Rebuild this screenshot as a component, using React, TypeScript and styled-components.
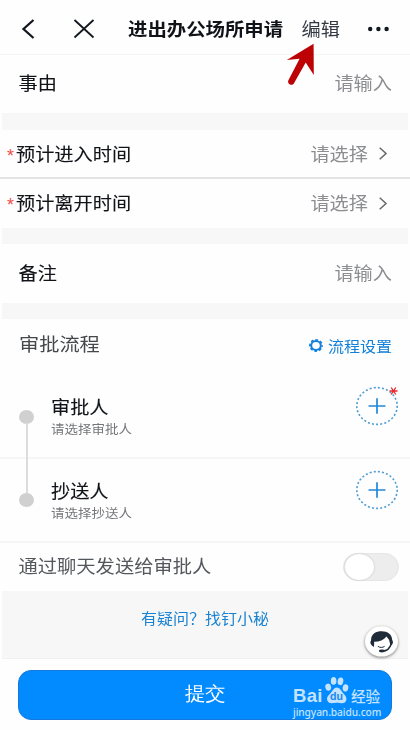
import React from "react";
import styled, { createGlobalStyle } from "styled-components";

const Global = createGlobalStyle`
  * { box-sizing: border-box; }
  body { margin: 0; background: #fff; font-family: "Noto Sans CJK SC", sans-serif; }
`;

const Screen = styled.main`
  width: 410px;
  height: 730px;
  position: relative;
  overflow: hidden;
  display: flex;
  flex-direction: column;
  background: #fefefe;
`;

const Label = styled.span<{ $size?: number; $color?: string; $weight?: number }>`
  display: block;
  white-space: nowrap;
  font-size: ${(p) => p.$size ?? 19.2}px;
  line-height: 24px;
  font-weight: ${(p) => p.$weight ?? 400};
  color: ${(p) => p.$color ?? "#101318"};
  -webkit-text-stroke: ${(p) => (p.$color || p.$weight ? 0 : 0.12)}px currentColor;
  transform: scaleY(0.92);
`;

const Header = styled.header`
  height: 55px;
  flex: none;
  display: flex;
  align-items: center;
  padding: 4px 21px 0 22px;
  border-bottom: 1px solid #f4f4f5;
`;

const BackButton = styled.span`
  width: 52px;
  height: 20px;
`;

const CloseButton = styled.span`
  width: 54px;
  height: 20px;
`;

const Title = styled(Label)`
  width: 173.5px;
`;

const EditLink = styled(Label)`
  flex: 1;
`;

const Icon = styled.svg`
  display: block;
  flex: none;
  overflow: visible;
`;

const Row = styled.div<{ $h: number; $left?: number; $right?: number; $bottom?: number; $line?: string }>`
  height: ${(p) => p.$h}px;
  flex: none;
  display: flex;
  align-items: center;
  justify-content: space-between;
  padding: 0 ${(p) => p.$right ?? 18}px ${(p) => p.$bottom ?? 2}px ${(p) => p.$left ?? 18.5}px;
  border-bottom: ${(p) => (p.$line ? `2px solid ${p.$line}` : "none")};
`;

const Gap = styled.div<{ $h: number }>`
  height: ${(p) => p.$h}px;
  flex: none;
  margin: 0 2px;
  background: #f7f7f7;
`;

const Group = styled.div<{ $gap?: number }>`
  display: flex;
  align-items: center;
  gap: ${(p) => p.$gap ?? 0}px;
`;

const Star = styled.span`
  width: 9px;
  font-family: "Liberation Sans", sans-serif;
  font-size: 18px;
  line-height: 18px;
  padding-top: 4px;
  color: #f0504a;
`;

const FlowHead = styled.div`
  height: 56px;
  flex: none;
  display: flex;
  align-items: center;
  justify-content: space-between;
  padding: 0 18px 6px 19px;
`;

const FlowLink = styled(Group)`
  padding-top: 3px;
`;

const Steps = styled.div`
  flex: none;
  display: flex;
  flex-direction: column;
`;

const Step = styled.div`
  height: 84px;
  display: flex;
  padding: 12px 11px 0 19px;
  border-bottom: 2px solid #f6f6f6;
`;

const Rail = styled.div<{ $top: number }>`
  width: 32px;
  padding-top: ${(p) => p.$top}px;
  position: relative;
`;

const Dot = styled.i`
  display: block;
  width: 15px;
  height: 14px;
  border-radius: 50%;
  background: #d0d0d0;
`;

const Connector = styled.i`
  position: absolute;
  left: 7px;
  top: 36px;
  width: 1.5px;
  height: 71px;
  background: #dcdcdc;
`;

const StepText = styled.div`
  flex: 1;
  padding-top: 7.5px;
`;

const StepHint = styled(Label)`
  line-height: 19px;
`;

const Add = styled.div`
  width: 43px;
  position: relative;
`;

const Required = styled.span`
  position: absolute;
  right: 1px;
  top: 0;
  line-height: 0;
`;

const Toggle = styled.div`
  width: 56px;
  height: 28px;
  margin: 2px -7px 0 0;
  border-radius: 15px;
  background: #ededed;
  border: 1px solid #e6e6e6;
`;

const Knob = styled.i`
  display: block;
  width: 29px;
  height: 26px;
  margin-left: 1px;
  border-radius: 50%;
  background: #fff;
  box-shadow: 0 0 2px #bbb;
`;

const Help = styled.div`
  height: 68px;
  flex: none;
  margin: 0 2px;
  padding-top: 15px;
  background: #f7f7f7;
  border-bottom: 1px solid #eff2f4;
  text-align: center;
`;

const Submit = styled.button`
  width: 374px;
  height: 50px;
  flex: none;
  margin: 11px 0 0 18px;
  padding: 0 0 2px;
  display: flex;
  align-items: center;
  justify-content: center;
  border: 1px solid #1479db;
  border-radius: 13px;
  background: #028aff;
`;

const Pointer = styled.svg`
  position: absolute;
  left: 284px;
  top: 42px;
`;

const Support = styled.svg`
  position: absolute;
  left: 362px;
  top: 624px;
  overflow: visible;
  filter: drop-shadow(0 1px 1.5px rgba(0, 0, 0, 0.5));
`;

const Watermark = styled.div`
  position: absolute;
  left: 293px;
  top: 676px;
  width: 92px;
  color: #c4e3ff;
`;

const Brand = styled.div`
  display: flex;
  height: 28px;
  align-items: flex-end;
`;

const BrandLatin = styled.span`
  width: 31px;
  font: 700 18.5px/17px "Liberation Sans", sans-serif;
  letter-spacing: 0.3px;
`;

const BrandHan = styled.span`
  margin-left: 1px;
  font-size: 14.6px;
  font-weight: 500;
  line-height: 17px;
  white-space: nowrap;
`;

const Site = styled.div`
  font: 500 10.2px/13px "Noto Sans", sans-serif;
  letter-spacing: -0.09px;
  margin-top: 2px;
  white-space: nowrap;
`;

const Chevron = () => (
  <Icon width="8" height="13" viewBox="0 0 8 13" fill="none" stroke="#66686b" strokeWidth="1.5">
    <path d="M.7.8 7 6.5.7 12.2" />
  </Icon>
);

const Asterisk = () => (
  <Icon width="9" height="8" viewBox="0 0 9 8" stroke="#e5252b" strokeWidth="1.3">
    <path d="M.5 4H8.5M2.2 .5 6.8 7.5M6.8 .5 2.2 7.5" />
  </Icon>
);

const AddIcon = () => (
  <Icon width="42" height="38" viewBox="0 0 42 38" fill="none">
    <ellipse cx="21" cy="19" rx="20.2" ry="18.4" stroke="#4f9cd4" strokeWidth="1.6" strokeDasharray="2 2.15" />
    <path d="M12.5 19h17M21 11.2v15.6" stroke="#2088d8" strokeWidth="1.7" />
  </Icon>
);

const Gear = () => (
  <Icon width="14" height="13" viewBox="0 0 14 13">
    <g fill="none" stroke="#1280dc">
      <ellipse cx="7" cy="6.5" rx="4.8" ry="4.4" strokeWidth="2" />
      <ellipse cx="7" cy="6.5" rx="6.1" ry="5.6" strokeWidth="1.7" strokeDasharray="2.6 2" strokeDashoffset="1.3" />
    </g>
  </Icon>
);

const Paw = () => (
  <Icon width="26" height="28" viewBox="0 0 26 29" fill="#c4e3ff">
    <ellipse cx="3.9" cy="11.6" rx="3" ry="3.7" transform="rotate(-12 3.9 11.6)" />
    <ellipse cx="9.5" cy="5.1" rx="2.9" ry="4" />
    <ellipse cx="16.6" cy="5.5" rx="2.9" ry="4" transform="rotate(12 16.6 5.5)" />
    <ellipse cx="21.8" cy="12.4" rx="2.9" ry="3.8" transform="rotate(8 21.8 12.4)" />
    <path d="M12.8 12c3.2 0 4.2 3.4 6.8 6 2.7 2.6 4.2 5 2.5 8.2-1.8 3.3-5.4 1.4-9.3 1.4s-7.4 1.9-9.4-1.4c-1.8-3.4.2-6 2.7-8.2 2.7-2.6 3.5-6 6.7-6Z" />
    <text x="5.8" y="24.8" fontFamily="Liberation Sans" fontWeight="700" fontSize="11" fill="#1688ef">du</text>
  </Icon>
);

const SelectRow = ({ text, line }: { text: string; line?: string }) => (
  <Row $h={49} $left={7} $right={23} $bottom={line ? 0 : 1} $line={line}>
    <Group>
      <Star>*</Star>
      <Label>{text}</Label>
    </Group>
    <Group $gap={11}>
      <Label $color="#8c8d90">请选择</Label>
      <Chevron />
    </Group>
  </Row>
);

export default function App() {
  return (
    <>
      <Global />
      <Screen>
        <Header>
          <BackButton>
            <Icon width="12" height="20" viewBox="0 0 12 20" fill="none" stroke="#121820" strokeWidth="2.3">
              <path d="M11.5 1 1.5 10l10 9" />
            </Icon>
          </BackButton>
          <CloseButton>
            <Icon width="20" height="19" viewBox="0 0 20 19" fill="none" stroke="#121820" strokeWidth="1.8">
              <path d="m.5 1 19 17.5M19.5 1 .5 18.5" />
            </Icon>
          </CloseButton>
          <Title $size={19.4} $weight={700}>进出办公场所申请</Title>
          <EditLink $color="#343a44">编辑</EditLink>
          <Icon width="21" height="5" viewBox="0 0 21 5" fill="#111820">
            <circle cx="2.2" cy="2" r="2.2" />
            <circle cx="10.4" cy="2" r="2.2" />
            <circle cx="18.6" cy="2" r="2.2" />
          </Icon>
        </Header>
        <Row $h={58}>
          <Label>事由</Label>
          <Label $color="#8c8d90">请输入</Label>
        </Row>
        <Gap $h={17} />
        <SelectRow text="预计进入时间" line="#e4e4e5" />
        <SelectRow text="预计离开时间" />
        <Gap $h={16} />
        <Row $h={59}>
          <Label>备注</Label>
          <Label $color="#8c8d90">请输入</Label>
        </Row>
        <Gap $h={16} />
        <FlowHead>
          <Label $size={20.2} $color="#45474a">审批流程</Label>
          <FlowLink $gap={5}>
            <Gear />
            <Label $size={16} $color="#1280d8">流程设置</Label>
          </FlowLink>
        </FlowHead>
        <Steps>
          <Step>
            <Rail $top={23}>
              <Dot />
              <Connector />
            </Rail>
            <StepText>
              <Label>审批人</Label>
              <StepHint $size={13.5} $color="#75777a">请选择审批人</StepHint>
            </StepText>
            <Add>
              <AddIcon />
              <Required><Asterisk /></Required>
            </Add>
          </Step>
          <Step>
            <Rail $top={22}>
              <Dot />
            </Rail>
            <StepText>
              <Label>抄送人</Label>
              <StepHint $size={13.5} $color="#75777a">请选择抄送人</StepHint>
            </StepText>
            <Add>
              <AddIcon />
            </Add>
          </Step>
        </Steps>
        <Row $h={48}>
          <Label $size={19.3} $color="#54575c">通过聊天发送给审批人</Label>
          <Toggle>
            <Knob />
          </Toggle>
        </Row>
        <Help>
          <Label $size={16} $color="#1a82d2">有疑问？找钉小秘</Label>
        </Help>
        <Submit>
          <Label $size={20.3} $color="#fff">提交</Label>
        </Submit>
        <Pointer width="32" height="46" viewBox="0 0 32 46">
          <path d="M29.6 1.8 2.8 18l12.8-1.2L4.4 38.2C2.8 41.8 8 44.8 10 41.2L21.7 20.4 29.8 33Z" fill="#bd0206" />
        </Pointer>
        <Support width="38" height="35" viewBox="0 0 38 35">
          <ellipse cx="19.5" cy="17.4" rx="16.5" ry="15.2" fill="#fff" />
          <path d="M12 23C8.5 21 7.5 18.5 9 16.5 9.2 9.5 14 7.3 19.8 7.3S30 10.5 30.2 16c1.3 1.6 1 4.5-1.6 5.7L27 15.8 24.5 12.5c-2.6 3.6-7 5.3-12.3 5.3Z" fill="#202b3a" />
          <path d="M29 20c-.9 4.6-4 6.9-9 7.3" fill="none" stroke="#202b3a" strokeWidth="1.4" />
          <path d="M15.8 22.3c2 1.5 4.8 1.5 6.8 0" fill="none" stroke="#202b3a" />
          <ellipse cx="19.8" cy="27" rx="3" ry="1.4" fill="#202b3a" />
        </Support>
        <Watermark>
          <Brand>
            <BrandLatin>Bai</BrandLatin>
            <Paw />
            <BrandHan>经验</BrandHan>
          </Brand>
          <Site>jingyan.baidu.com</Site>
        </Watermark>
      </Screen>
    </>
  );
}
